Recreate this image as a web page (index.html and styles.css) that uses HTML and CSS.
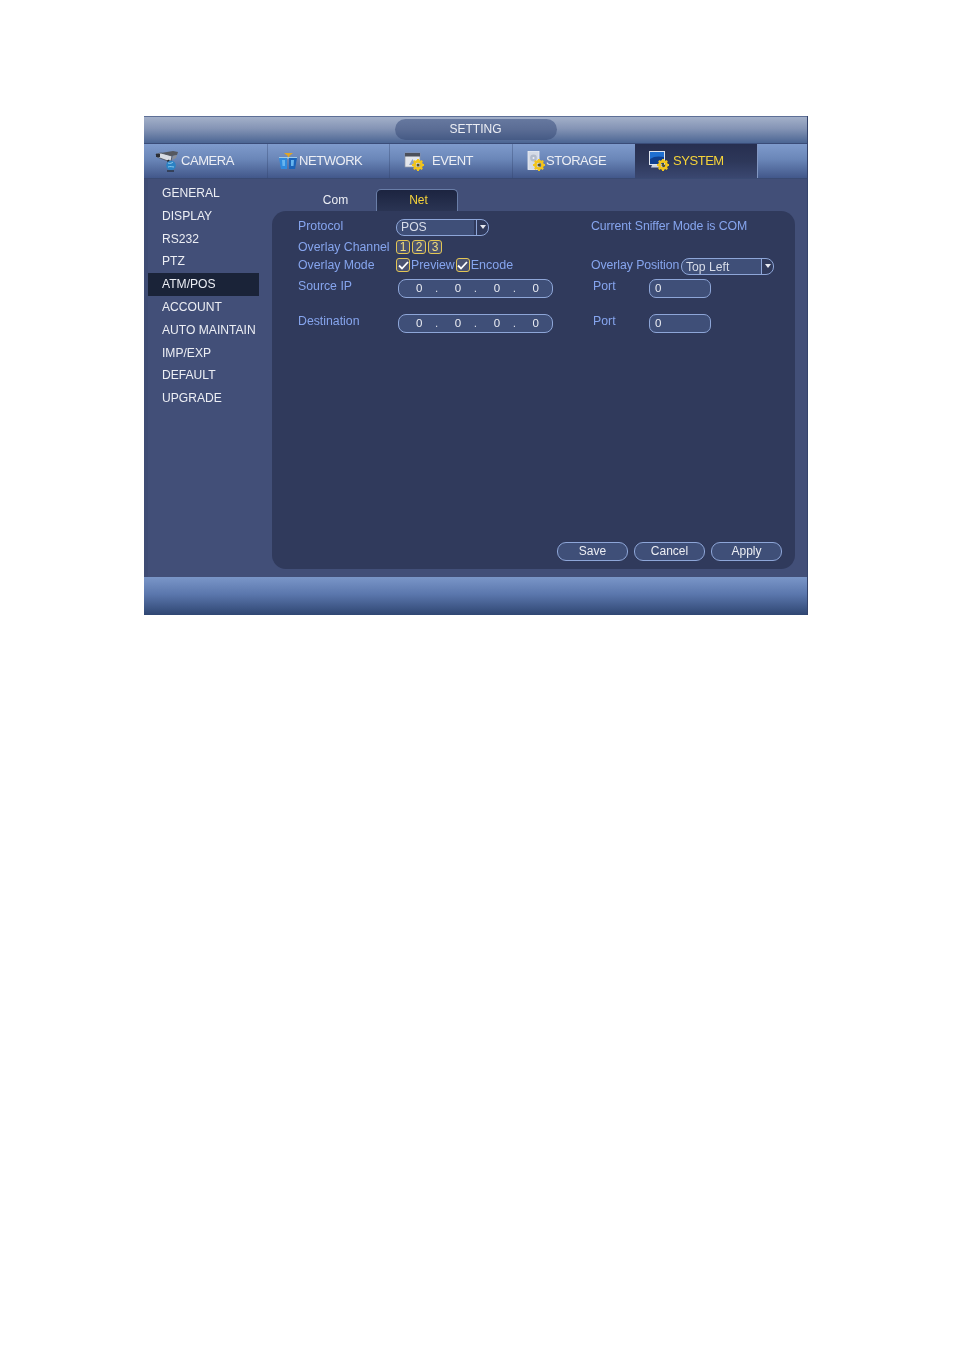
FILE: index.html
```html
<!DOCTYPE html>
<html lang="en">
<head>
    <meta charset="UTF-8">
    <title>Setting</title>
    <link rel="stylesheet" href="styles.css">
</head>
<body>
    <svg class="defs" width="0" height="0">
        <defs>
            <g id="gear">
                <circle cx="6" cy="6" r="3.6" fill="none" stroke="#f2c51c" stroke-width="2.6"/>
                <path d="M6 0v2.4M6 9.6V12M0 6h2.4M9.6 6H12M1.8 1.8l1.7 1.7M8.5 8.5l1.7 1.7M10.2 1.8L8.5 3.5M3.5 8.5l-1.7 1.7" stroke="#f2c51c" stroke-width="2"/>
                <circle cx="6" cy="6" r="1.5" fill="#5a5426"/>
            </g>
        </defs>
    </svg>
    <div class="window">
        <div class="titlebar"><div class="title-pill">SETTING</div></div>
        <div class="tabs">
            <div class="tab tab-camera">
                <svg class="icon" width="24" height="22" viewBox="0 0 24 22">
                    <path d="M1 4l5-1 11 3-1 5-3 0L2 7z" fill="#d8dce4" stroke="#3a3d46" stroke-width=".7"/>
                    <path d="M6 3l12-2 5 1-1 3-5 1z" fill="#55585f"/>
                    <path d="M18 6l4-1-1 3-4 2z" fill="#8b8e96"/>
                    <rect x="1" y="4" width="4" height="3" fill="#2b2e36"/>
                    <path d="M13 10l2 5" stroke="#23262e" stroke-width="2.2"/>
                    <circle cx="16" cy="15.5" r="4.8" fill="#2b82c4"/>
                    <path d="M13 13c2 1 4 0 5-1M13 17c2-1 5 0 6 0" stroke="#9ad3f0" stroke-width=".9" fill="none"/>
                    <path d="M12 21h7" stroke="#23262e" stroke-width="1.2"/>
                </svg>
                <span>CAMERA</span>
            </div>
            <div class="tab tab-network">
                <svg class="icon" width="20" height="18" viewBox="0 0 20 18">
                    <path d="M6 1h9l-3 2.500H9z" fill="#e0a526"/>
                    <path d="M10.500 3v2" stroke="#e0a526" stroke-width="1.500"/>
                    <path d="M1 5h18v1.500H1z" fill="#9ccbe9"/>
                    <path d="M1 6h8v11H3z" fill="#2f8ade"/>
                    <path d="M11 6h8l-2 11h-6z" fill="#1c63b8"/>
                    <path d="M4 8h3v6H4.500zM13 8h3l-.5 6H13z" fill="#66b4ee"/>
                </svg>
                <span>NETWORK</span>
            </div>
            <div class="tab tab-event">
                <svg class="icon" width="20" height="19" viewBox="0 0 20 19">
                    <rect x="1" y="1" width="15" height="14" fill="#e3e6ec" stroke="#8f95a4" stroke-width=".7"/>
                    <rect x="1" y="1" width="15" height="3.500" fill="#4b4f5a"/>
                    <path d="M5 13l3.500-6 3.500 6z" fill="#8fa3c8"/>
                    <use href="#gear" x="8" y="7"/>
                </svg>
                <span>EVENT</span>
            </div>
            <div class="tab tab-storage">
                <svg class="icon" width="18" height="20" viewBox="0 0 18 20">
                    <rect x="1" y="0.500" width="11" height="18" fill="#d5dbe6" stroke="#eef1f6" stroke-width=".8"/>
                    <circle cx="6.500" cy="7" r="3.400" fill="#b3bccd"/>
                    <circle cx="6.500" cy="7" r="1" fill="#eef1f6"/>
                    <use href="#gear" x="6" y="8"/>
                </svg>
                <span>STORAGE</span>
            </div>
            <div class="tab tab-system active">
                <svg class="icon" width="20" height="20" viewBox="0 0 20 20">
                    <rect x="0.500" y="0.500" width="15" height="13" fill="#1f6fd0" stroke="#dfe5ef"/>
                    <path d="M1 8c4-3 9-3 14-2v7H1z" fill="#0f3f8e"/>
                    <path d="M3 14h10l1 2.500H2z" fill="#cdd4e0"/>
                    <use href="#gear" x="8" y="8"/>
                </svg>
                <span>SYSTEM</span>
            </div>
            <div class="tab-rest"></div>
        </div>
        <div class="content">
            <ul class="side-menu">
                <li>GENERAL</li>
                <li>DISPLAY</li>
                <li>RS232</li>
                <li>PTZ</li>
                <li class="active">ATM/POS</li>
                <li>ACCOUNT</li>
                <li>AUTO MAINTAIN</li>
                <li>IMP/EXP</li>
                <li>DEFAULT</li>
                <li>UPGRADE</li>
            </ul>
            <div class="main">
                <div class="subtabs">
                    <div class="subtab">Com</div>
                    <div class="subtab active">Net</div>
                </div>
                <div class="panel">
                    <div class="row row-protocol">
                        <label>Protocol</label>
                        <div class="select select-protocol"><span>POS</span><i class="arrow"></i></div>
                        <label class="right-note">Current Sniffer Mode is COM</label>
                    </div>
                    <div class="row row-channel">
                        <label>Overlay Channel</label>
                        <div class="channels">
                            <span class="chan">1</span>
                            <span class="chan">2</span>
                            <span class="chan">3</span>
                        </div>
                    </div>
                    <div class="row row-mode">
                        <label>Overlay Mode</label>
                        <div class="modes">
                            <span class="check"><svg width="11" height="9" viewBox="0 0 11 9"><path d="M1 4.500l3 3 6-6.500" fill="none" stroke="#fff" stroke-width="1.8"/></svg></span><span class="mode-text">Preview</span>
                            <span class="check"><svg width="11" height="9" viewBox="0 0 11 9"><path d="M1 4.500l3 3 6-6.500" fill="none" stroke="#fff" stroke-width="1.8"/></svg></span><span class="mode-text">Encode</span>
                        </div>
                        <label class="right-note pos-label">Overlay Position</label>
                        <div class="select select-position"><span>Top Left</span><i class="arrow"></i></div>
                    </div>
                    <div class="row row-source">
                        <label>Source IP</label>
                        <div class="ip"><span>0</span><b>.</b><span>0</span><b>.</b><span>0</span><b>.</b><span>0</span></div>
                        <label class="port-label">Port</label>
                        <div class="port">0</div>
                    </div>
                    <div class="row row-dest">
                        <label>Destination</label>
                        <div class="ip"><span>0</span><b>.</b><span>0</span><b>.</b><span>0</span><b>.</b><span>0</span></div>
                        <label class="port-label">Port</label>
                        <div class="port">0</div>
                    </div>
                    <div class="buttons">
                        <button>Save</button>
                        <button>Cancel</button>
                        <button>Apply</button>
                    </div>
                </div>
            </div>
        </div>
        <div class="footer"></div>
    </div>
</body>
</html>
```

FILE: styles.css
```css
:root {
    --label-color: #86a5ee;
    --text-color: #eceef4;
    --yellow: #f5d33a;
    --field-border: #8ea6d8;
    --field-bg: #3f4f78;
}
* {
    box-sizing: border-box;
}
body {
    margin: 0;
    padding: 116px 0 0 144px;
    background-color: #fff;
    font-family: "Liberation Sans", Arial, sans-serif;
    font-size: 13px;
    color: var(--text-color);
}
.defs {
    position: absolute;
}
.window {
    width: 664px;
    height: 499px;
    display: flex;
    flex-direction: column;
    background-color: #424f78;
    border-right: 1px solid #34436b;
    filter: blur(0.3px);
}
.titlebar {
    height: 28px;
    flex: none;
    background: linear-gradient(#a3b0c9, #8494b5 45%, #4b6593);
    border-top: 1px solid #5d6f96;
    border-bottom: 1px solid #3a4c78;
    display: flex;
    justify-content: center;
    padding-top: 2px;
}
.title-pill {
    width: 162px;
    height: 21px;
    border-radius: 11px;
    background: linear-gradient(#66789f, #5a6c94 50%, #455a85);
    text-align: center;
    font-size: 12px;
    line-height: 21px;
}
.tabs {
    height: 35px;
    flex: none;
    display: flex;
    background: linear-gradient(#7f9bcc, #6a86b8 45%, #42578a);
    border-bottom: 1px solid #3a4a72;
}
.tab {
    height: 100%;
    display: flex;
    align-items: center;
    border-left: 1px solid rgba(50, 65, 105, 0.35);
    font-size: 13px;
    letter-spacing: -0.45px;
}
.tab span {
    margin-top: -1px;
}
.tab-camera {
    width: 123px;
    padding-left: 11px;
    gap: 2px;
    border-left: none;
}
.tab-network {
    width: 122px;
    padding-left: 10px;
    gap: 1px;
}
.tab-event {
    width: 123px;
    padding-left: 14px;
    gap: 8px;
}
.tab-storage {
    width: 123px;
    padding-left: 14px;
    gap: 1px;
}
.tab-system {
    width: 122px;
    padding-left: 14px;
    gap: 4px;
}
.tab.active {
    background: linear-gradient(#272f50, #2d3759 50%, #3a4770);
    color: var(--yellow);
    border-left: none;
}
.tab-rest {
    flex: 1;
    border-left: 1px solid #8297c2;
}
.content {
    flex: 1;
    display: flex;
    border-left: 4px solid #3f4c74;
}
.side-menu {
    width: 111px;
    margin: 3px 0 0;
    padding: 0;
    list-style: none;
    flex: none;
    font-size: 12.1px;
}
.side-menu li {
    height: 22.8px;
    line-height: 22px;
    padding-left: 14px;
    white-space: nowrap;
}
.side-menu li.active {
    background-color: #1a2338;
}
.main {
    margin-left: 13px;
    width: 523px;
    display: flex;
    flex-direction: column;
}
.subtabs {
    height: 32px;
    flex: none;
    display: flex;
    padding: 10px 0 0 23px;
}
.subtab {
    width: 81px;
    height: 22px;
    text-align: center;
    font-size: 12px;
    line-height: 22px;
}
.subtab.active {
    width: 82px;
    padding-left: 3px;
    background: linear-gradient(#1c2440, #2a3453);
    border: 1px solid #6a7ea8;
    border-bottom: none;
    border-radius: 5px 5px 0 0;
    color: var(--yellow);
    line-height: 20px;
}
.panel {
    height: 358px;
    flex: none;
    background-color: #303a5c;
    border-radius: 14px;
    position: relative;
    padding: 6px 0 0 26px;
    display: flex;
    flex-direction: column;
}
label {
    display: block;
    flex: none;
    width: 98px;
    color: var(--label-color);
    font-size: 12.3px;
    white-space: nowrap;
}
.row {
    display: flex;
    align-items: center;
    flex: none;
}
.row-protocol {
    height: 20px;
}
.row-channel {
    height: 19px;
}
.row-mode {
    height: 18px;
}
.row-source {
    height: 22px;
    margin-top: 3px;
}
.row-dest {
    height: 22px;
    margin-top: 13px;
}
.row-protocol label {
    position: relative;
    top: -1px;
}
.row-source label,
.row-dest label {
    position: relative;
    top: -2px;
}
.select {
    flex: none;
    display: flex;
    align-items: center;
    justify-content: space-between;
    height: 17px;
    border: 1px solid var(--field-border);
    border-radius: 8px;
    background: linear-gradient(to right, var(--field-bg) 85%, #303a5c 85%);
    font-size: 12.2px;
    padding-left: 4px;
    color: #d8dde9;
}
.arrow {
    width: 12px;
    height: 100%;
    position: relative;
    border-left: 1px solid var(--field-border);
}
.arrow::after {
    content: '';
    position: absolute;
    left: 3px;
    top: 5px;
    border: 3px solid transparent;
    border-top: 4px solid #e6e9f0;
    border-bottom: none;
}
.select-protocol {
    width: 93px;
    margin-right: 102px;
}
.right-note {
    width: auto;
    letter-spacing: -0.08px;
}
.channels {
    display: flex;
    gap: 2px;
}
.chan {
    width: 14px;
    height: 14px;
    border: 1px solid #e3c654;
    border-radius: 3px;
    background-color: #4a5270;
    color: #f2dd7c;
    font-size: 12px;
    line-height: 12px;
    text-align: center;
}
.modes {
    display: flex;
    align-items: center;
    width: 195px;
    flex: none;
}
.check {
    width: 14px;
    height: 14px;
    flex: none;
    display: flex;
    align-items: center;
    justify-content: center;
    border: 1px solid #e3c654;
    border-radius: 3px;
    background-color: #4a5270;
}
.mode-text {
    color: var(--label-color);
    font-size: 12.3px;
    margin: 0 1px;
}
.mode-text:last-child {
    font-size: 12.5px;
}
.pos-label {
    width: 90px;
}
.select-position {
    width: 93px;
    margin-top: 3px;
    background: linear-gradient(to right, var(--field-bg) 87%, #303a5c 87%);
}
.ip {
    flex: none;
    width: 155px;
    height: 19px;
    margin-left: 2px;
    margin-right: 40px;
    border: 1px solid var(--field-border);
    border-radius: 8px;
    background-color: var(--field-bg);
    display: flex;
    align-items: center;
    justify-content: space-between;
    padding: 0 13px 0 17px;
    font-size: 11.5px;
}
.ip b {
    font-weight: normal;
    font-size: 10px;
    margin-right: 4px;
}
.port-label {
    width: 56px;
}
.port {
    width: 62px;
    height: 19px;
    border: 1px solid var(--field-border);
    border-radius: 7px;
    background-color: var(--field-bg);
    padding-left: 5px;
    font-size: 11.5px;
    line-height: 17px;
}
.buttons {
    position: absolute;
    right: 13px;
    bottom: 8px;
    display: flex;
    gap: 6px;
}
button {
    width: 71px;
    height: 19px;
    padding: 0 0 1px;
    border: 1px solid var(--field-border);
    border-radius: 9px;
    background-color: var(--field-bg);
    color: var(--text-color);
    font-family: inherit;
    font-size: 12px;
}
.footer {
    height: 38px;
    flex: none;
    background: linear-gradient(#7a96c8, #5b77ad 45%, #2f4672);
}
```
